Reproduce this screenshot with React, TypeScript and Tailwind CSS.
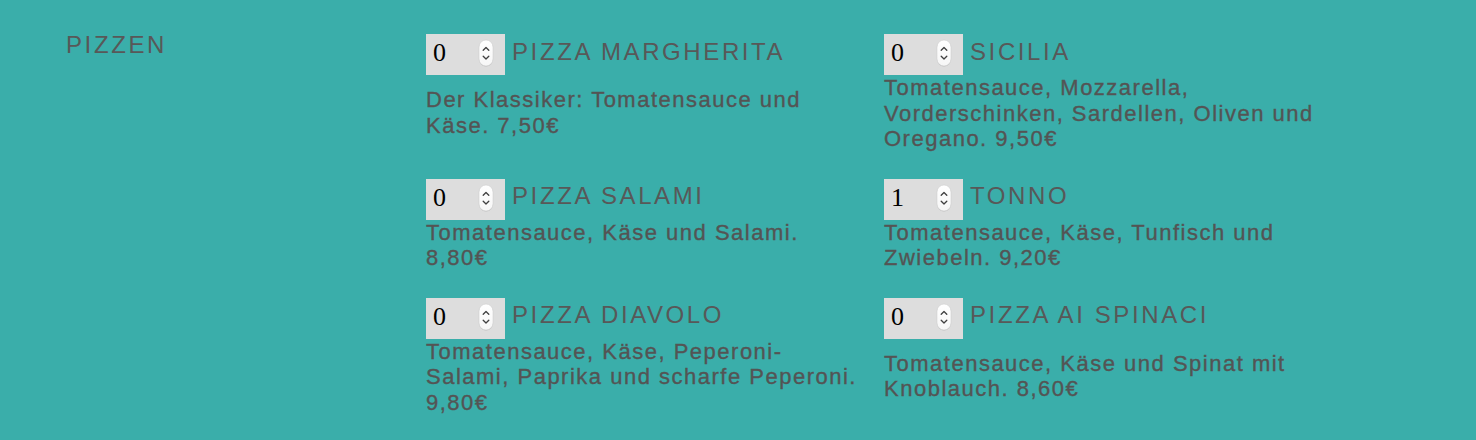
import React from "react";

type Pizza = { qty: number; name: string; lines: string[]; gap?: boolean };

const pizzas: Pizza[] = [
  { qty: 0, name: "PIZZA MARGHERITA", lines: ["Der Klassiker: Tomatensauce und", "Käse. 7,50€"], gap: true },
  { qty: 0, name: "SICILIA", lines: ["Tomatensauce, Mozzarella,", "Vorderschinken, Sardellen, Oliven und", "Oregano. 9,50€"] },
  { qty: 0, name: "PIZZA SALAMI", lines: ["Tomatensauce, Käse und Salami.", "8,80€"] },
  { qty: 1, name: "TONNO", lines: ["Tomatensauce, Käse, Tunfisch und", "Zwiebeln. 9,20€"] },
  { qty: 0, name: "PIZZA DIAVOLO", lines: ["Tomatensauce, Käse, Peperoni-", "Salami, Paprika und scharfe Peperoni.", "9,80€"] },
  { qty: 0, name: "PIZZA AI SPINACI", lines: ["Tomatensauce, Käse und Spinat mit", "Knoblauch. 8,60€"], gap: true },
];

function Stepper() {
  return (
    <svg width="16" height="28" viewBox="0 0 16 28" className="block">
      <defs>
        <linearGradient id="pillg" x1="0" y1="0" x2="0" y2="1">
          <stop offset="0" stopColor="#ffffff" />
          <stop offset="1" stopColor="#f6f6f6" />
        </linearGradient>
      </defs>
      <rect x="1" y="1.6" width="14" height="26" rx="7" fill="#a8a8a8" opacity="0.55" />
      <rect x="1" y="1" width="14" height="26" rx="7" fill="url(#pillg)" stroke="#c8c8c8" strokeWidth="0.5" />
      <path d="M5.2 11.3 L8 8.5 L10.8 11.3" fill="none" stroke="#3f3f3f" strokeWidth="1.3" strokeLinecap="round" strokeLinejoin="round" />
      <path d="M5.2 17.2 L8 20 L10.8 17.2" fill="none" stroke="#3f3f3f" strokeWidth="1.3" strokeLinecap="round" strokeLinejoin="round" />
    </svg>
  );
}

function QtyBox({ qty }: { qty: number }) {
  return (
    <div className="relative w-[79px] h-[41px] bg-[#dddddd] shrink-0">
      <span
        className="absolute left-[7px] top-0 text-[26px] leading-[38px] text-black"
        style={{ fontFamily: '"Liberation Serif", "Times New Roman", serif' }}
      >
        {qty}
      </span>
      <div className="absolute left-[52px] top-[5px]">
        <Stepper />
      </div>
    </div>
  );
}

function Item({ p }: { p: Pizza }) {
  return (
    <div className="flex flex-col">
      <div className="flex items-start">
        <QtyBox qty={p.qty} />
        <div className="ml-[7px] mt-[3.7px] text-[24px] leading-[28px] tracking-[2.6px] text-[#585858] whitespace-nowrap">
          {p.name}
        </div>
      </div>
      <div
        className={`${p.gap ? "mt-[12px]" : ""} text-[22px] leading-[25.5px] tracking-[1.5px] text-[#545454] [-webkit-text-stroke:0.35px_#545454]`}
      >
        {p.lines.map((l, i) => (
          <div key={i} className="whitespace-nowrap">
            {l}
          </div>
        ))}
      </div>
    </div>
  );
}

export default function App() {
  return (
    <div
      className="w-full h-[440px] bg-[#3aaeaa] overflow-hidden"
      style={{ fontFamily: '"Liberation Sans", Arial, Helvetica, sans-serif' }}
    >
      <div className="flex pt-[31px] pl-[66px]">
        <div className="w-[360px] shrink-0 text-[24px] leading-[28px] tracking-[2.6px] text-[#585858]">
          PIZZEN
        </div>
        <div className="mt-[3px] grid grid-cols-[458px_458px] gap-y-[27px]">
          {pizzas.map((p, i) => (
            <Item key={i} p={p} />
          ))}
        </div>
      </div>
    </div>
  );
}
